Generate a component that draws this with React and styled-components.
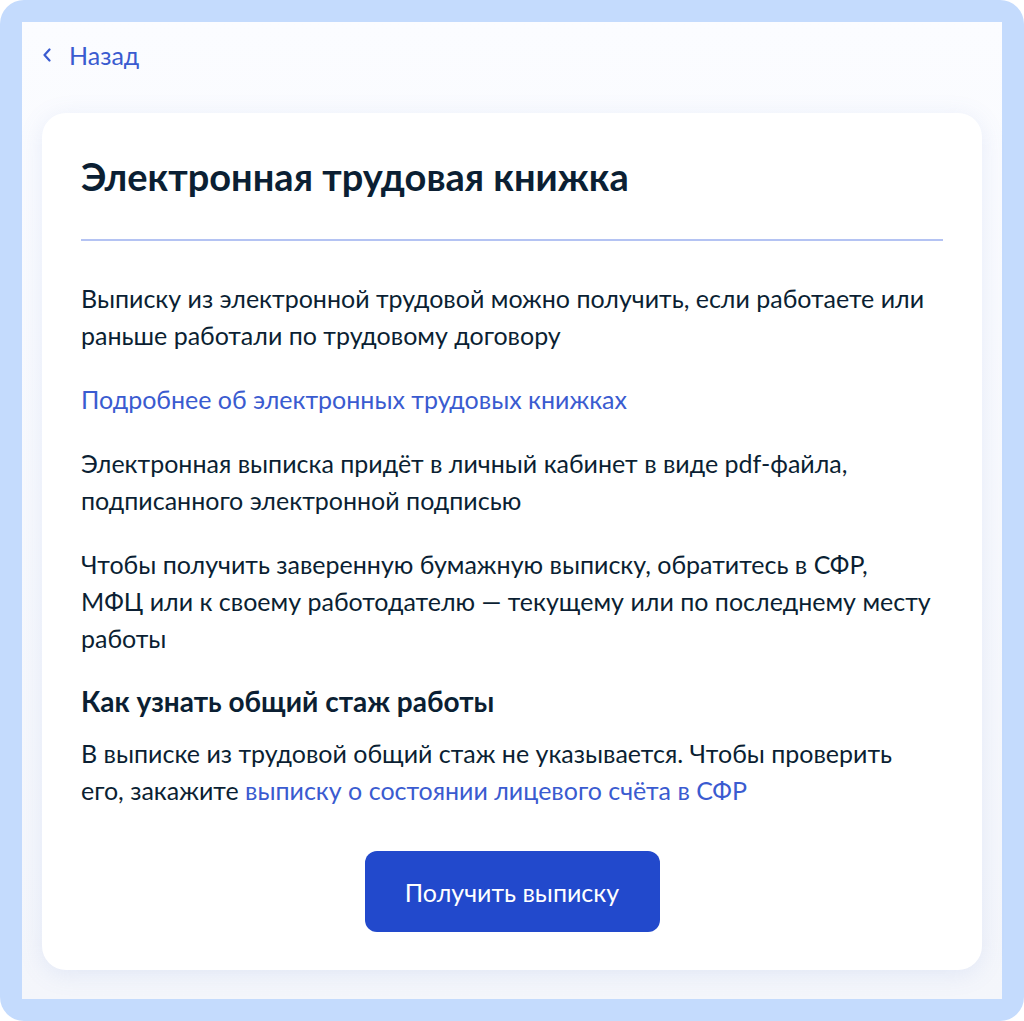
import React from "react";
import styled, { createGlobalStyle } from "styled-components";

const Global = createGlobalStyle`
  html, body { margin: 0; padding: 0; background: #ffffff; }
  body { font-family: Lato, "Noto Sans", sans-serif; }
  * { box-sizing: border-box; }
`;

const Frame = styled.div`
  width: 1024px;
  height: 1021px;
  background: #c4dbfd;
  border-radius: 24px;
  padding: 22px;
`;

const Screen = styled.div`
  height: 977px;
  background: linear-gradient(180deg, #fbfcff 0%, #f4f6fb 100%);
  padding: 0 20px 29px 20px;
  display: flex;
  flex-direction: column;
`;

const Back = styled.a`
  display: flex;
  align-items: center;
  gap: 17px;
  height: 66px;
  margin-bottom: 25px;
  color: #3a5bd0;
  font-size: 25px;
  text-decoration: none;
`;

const Card = styled.section`
  flex: 1;
  background: #ffffff;
  border-radius: 24px;
  box-shadow: 0 4px 24px rgba(100, 130, 210, 0.13);
  padding: 40px 39px 0 39px;
  display: flex;
  flex-direction: column;
`;

const Title = styled.h1`
  margin: 0;
  font-size: 38px;
  line-height: 46px;
  font-weight: 700;
  color: #0b1f33;
`;

const Divider = styled.hr`
  margin: 40px 0 39px 0;
  border: 0;
  height: 2px;
  background: #b4c3f3;
`;

const Para = styled.p`
  margin: 0 0 ${(p) => (p.$gap != null ? p.$gap : 27)}px 0;
  font-size: 25px;
  line-height: 37px;
  color: #0b1f33;
`;

const Link = styled.a`
  color: #3a5bd0;
  text-decoration: none;
`;

const Subtitle = styled.h2`
  margin: 0 0 18px 0;
  font-size: 28px;
  line-height: 32px;
  font-weight: 700;
  color: #0b1f33;
`;

const ButtonRow = styled.div`
  display: flex;
  justify-content: center;
  margin-top: 42px;
`;

const Button = styled.button`
  width: 295px;
  height: 81px;
  border: 0;
  border-radius: 12px;
  background: #2249cc;
  color: #ffffff;
  font-family: Lato, "Noto Sans", sans-serif;
  font-size: 25px;
`;

const Chevron = () => (
  <svg width="10" height="14" viewBox="0 0 10 14" fill="none">
    <path d="M7.5 1.5L2.5 7l5 5.5" stroke="#3a5bd0" strokeWidth="2.2" strokeLinecap="round" strokeLinejoin="round" />
  </svg>
);

export default function App() {
  return (
    <>
      <Global />
      <Frame>
        <Screen>
          <Back href="#">
            <Chevron />
            Назад
          </Back>
          <Card>
            <Title>Электронная трудовая книжка</Title>
            <Divider />
            <Para>
              Выписку из электронной трудовой можно получить, если работаете или
              <br />
              раньше работали по трудовому договору
            </Para>
            <Para>
              <Link href="#">Подробнее об электронных трудовых книжках</Link>
            </Para>
            <Para>
              Электронная выписка придёт в личный кабинет в виде pdf-файла,
              <br />
              подписанного электронной подписью
            </Para>
            <Para $gap={28}>
              Чтобы получить заверенную бумажную выписку, обратитесь в СФР,
              <br />
              МФЦ или к своему работодателю — текущему или по последнему месту
              <br />
              работы
            </Para>
            <Subtitle>Как узнать общий стаж работы</Subtitle>
            <Para $gap={0}>
              В выписке из трудовой общий стаж не указывается. Чтобы проверить
              <br />
              его, закажите{" "}
              <Link href="#">выписку о состоянии лицевого счёта в СФР</Link>
            </Para>
            <ButtonRow>
              <Button>Получить выписку</Button>
            </ButtonRow>
          </Card>
        </Screen>
      </Frame>
    </>
  );
}
